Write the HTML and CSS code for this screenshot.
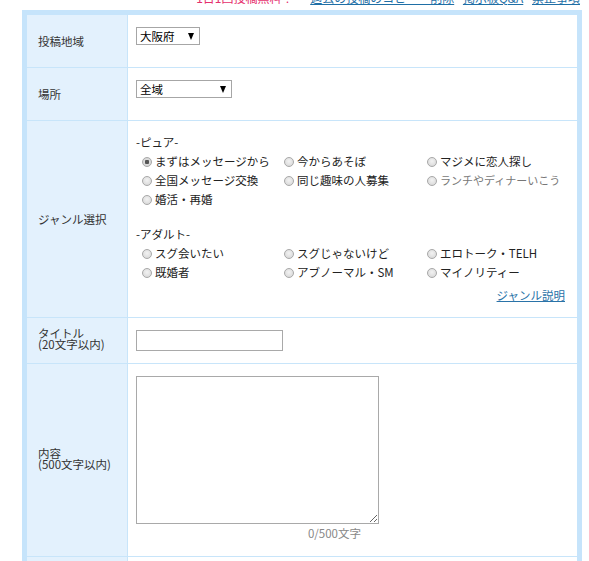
FILE: index.html
```html
<!DOCTYPE html>
<html lang="ja">
<head>
<meta charset="utf-8">
<title>投稿フォーム</title>
<link rel="stylesheet" href="styles.css">
</head>
<body>
<div class="page">
  <div class="topnav">
    <span class="free">1日1回投稿無料！</span>
    <a href="#">過去の投稿のコピー・削除</a>
    <a href="#">掲示板Q&amp;A</a>
    <a href="#">禁止事項</a>
  </div>
  <div class="form-box">
    <table class="form-table">
      <tr class="row-area">
        <th>投稿地域</th>
        <td>
          <span class="sel sel-pref"><select><option>大阪府</option></select></span>
        </td>
      </tr>
      <tr class="row-place">
        <th>場所</th>
        <td>
          <span class="sel sel-place"><select><option>全域</option></select></span>
        </td>
      </tr>
      <tr class="row-genre">
        <th>ジャンル選択</th>
        <td>
          <div class="group-title">-ピュア-</div>
          <div class="radios">
            <label><input type="radio" name="g" checked>まずはメッセージから</label>
            <label><input type="radio" name="g">今からあそぼ</label>
            <label><input type="radio" name="g">マジメに恋人探し</label>
            <label><input type="radio" name="g">全国メッセージ交換</label>
            <label><input type="radio" name="g">同じ趣味の人募集</label>
            <label class="dim"><input type="radio" name="g">ランチやディナーいこう</label>
            <label><input type="radio" name="g">婚活・再婚</label>
          </div>
          <div class="group-title adult">-アダルト-</div>
          <div class="radios">
            <label><input type="radio" name="g">スグ会いたい</label>
            <label><input type="radio" name="g">スグじゃないけど</label>
            <label><input type="radio" name="g">エロトーク・TELH</label>
            <label><input type="radio" name="g">既婚者</label>
            <label><input type="radio" name="g">アブノーマル・SM</label>
            <label><input type="radio" name="g">マイノリティー</label>
          </div>
          <div class="genre-help"><a href="#">ジャンル説明</a></div>
        </td>
      </tr>
      <tr class="row-title">
        <th class="two-line">タイトル<br>(20文字以内)</th>
        <td><input type="text" class="title-input"></td>
      </tr>
      <tr class="row-body">
        <th class="two-line">内容<br>(500文字以内)</th>
        <td>
          <textarea class="body-input"></textarea>
          <div class="counter">0/500文字</div>
        </td>
      </tr>
      <tr class="row-extra">
        <th>画像</th>
        <td></td>
      </tr>
    </table>
  </div>
</div>
</body>
</html>
```

FILE: styles.css
```css
html, body {
  margin: 0;
  padding: 0;
  background: #fff;
}
body {
  font-family: "Noto Sans CJK JP", "Noto Sans", sans-serif;
  font-size: 11.5px;
  color: #333;
}
.page {
  width: 589px;
  overflow: hidden;
  height: 561px;
}
.topnav {
  margin-top: -9px;
  height: 19px;
  line-height: 14px;
  font-size: 12px;
  text-align: right;
  padding-right: 9px;
  white-space: nowrap;
}
.topnav .free {
  color: #e5306c;
  margin-right: 8px;
}
.topnav a {
  color: #1f6fa6;
  margin-left: 6px;
}
.form-box {
  margin-left: 22px;
  width: 550px;
  border: 5px solid #c6e4fb;
}
.form-table {
  width: 100%;
  border-collapse: collapse;
}
.form-table th {
  width: 89px;
  padding: 0 0 0 11px;
  text-align: left;
  font-weight: normal;
  background: #e3f1fd;
  border-right: 1px solid #c8e5fa;
  border-bottom: 1px solid #c8e5fa;
  vertical-align: middle;
}
.form-table td {
  padding: 12px 12px 0 8px;
  vertical-align: top;
  border-bottom: 1px solid #c8e5fa;
  line-height: 19px;
}
.row-area td, .row-area th { height: 40px; }
.row-place td, .row-place th { height: 40px; }
.row-genre td { height: 184px; }
.row-title td { height: 33px; }
.row-body td { height: 180px; }
.row-extra th { height: 60px; }

.two-line { line-height: 11px; }
.row-title th { padding-bottom: 4px; }
.row-body th { padding-bottom: 2px; }

.sel {
  position: relative;
  display: inline-block;
  vertical-align: top;
}
.sel select {
  -webkit-appearance: none;
  appearance: none;
  display: block;
  height: 18px;
  margin: 0;
  padding: 0 0 0 3px;
  border: 1px solid #a6a6a6;
  border-radius: 0;
  background: #fff;
  font-family: inherit;
  font-size: 11.5px;
  color: #000;
  line-height: 16px;
}
.sel::after {
  content: "";
  position: absolute;
  top: 6px;
  right: 6px;
  border-left: 3.5px solid transparent;
  border-right: 3.5px solid transparent;
  border-top: 7px solid #000;
  pointer-events: none;
}
.sel-pref select { width: 64px; }
.sel-place select { width: 96px; }

.group-title { color: #222; }
.group-title.adult { margin-top: 16px; }

.radios {
  display: grid;
  grid-template-columns: 142px 143px auto;
  padding-left: 6px;
}
.radios label {
  display: flex;
  align-items: center;
  white-space: nowrap;
  color: #222;
}
.radios label.dim {
  color: #777;
  font-size: 11px;
}
.radios input {
  -webkit-appearance: none;
  appearance: none;
  width: 10px;
  height: 10px;
  margin: 0 3px 0 0;
  border: 1px solid #a9a9a9;
  border-radius: 50%;
  background: radial-gradient(circle at 50% 40%, #f2f2f2 0%, #d4d4d4 100%);
  box-sizing: border-box;
  flex: none;
}
.radios input:checked {
  background: radial-gradient(circle, #555 0 2px, #dcdcdc 2.5px, #cfcfcf 100%);
}
.genre-help {
  margin-top: 4px;
  text-align: right;
}
.genre-help a { color: #2a73a8; }

.title-input {
  display: block;
  width: 147px;
  height: 21px;
  box-sizing: border-box;
  margin: 0;
  border: 1px solid #a9a9a9;
  border-radius: 0;
  padding: 0 3px;
}
.body-input {
  display: block;
  width: 243px;
  height: 148px;
  box-sizing: border-box;
  margin: 0;
  border: 1px solid #a9a9a9;
  border-radius: 0;
  padding: 2px;
}
.counter {
  width: 225px;
  text-align: right;
  color: #888;
  line-height: 19px;
}
```
